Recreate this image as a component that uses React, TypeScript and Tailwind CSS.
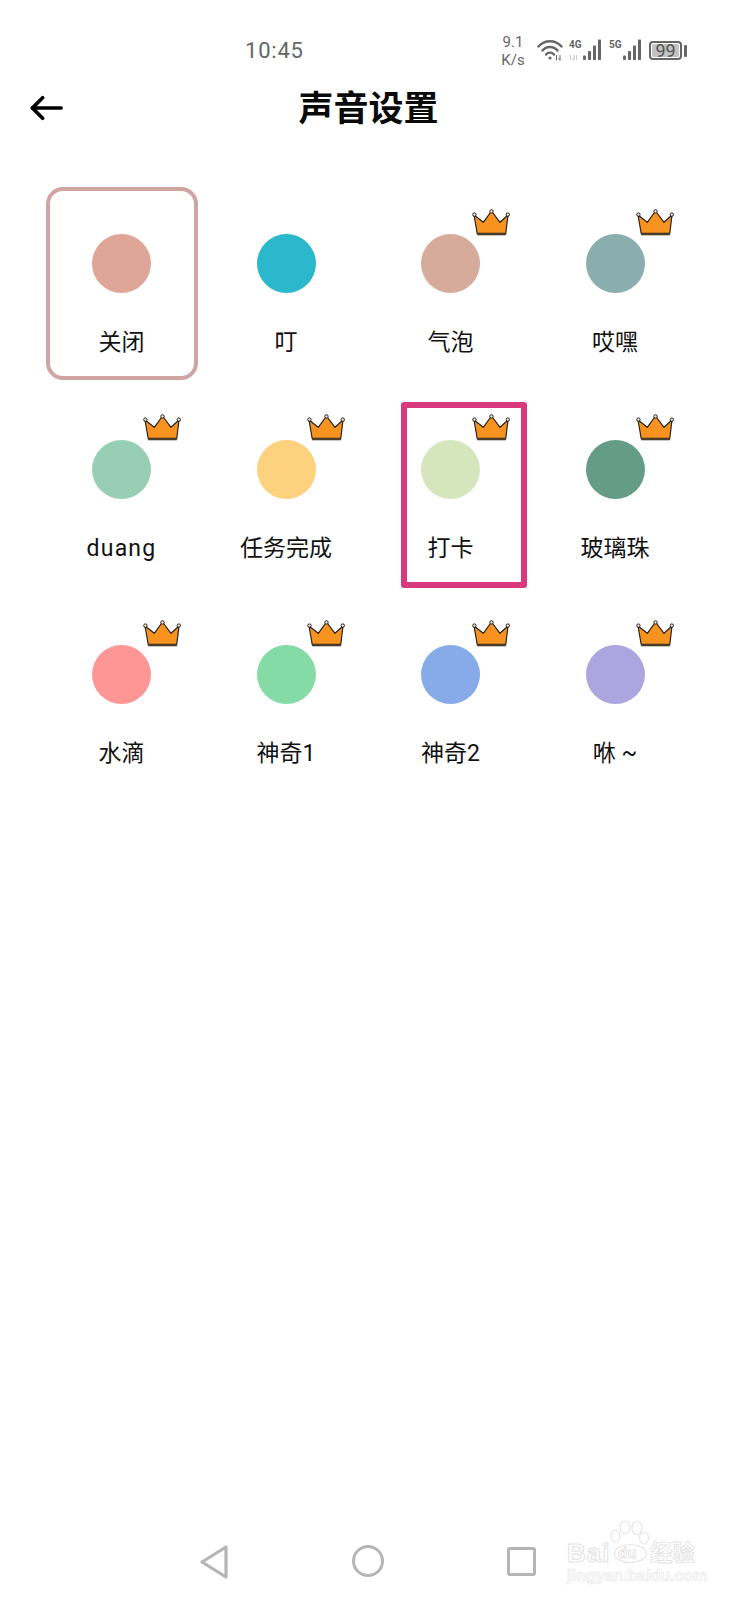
const cjk = "font-['Roboto','Noto_Sans_CJK_SC',sans-serif]";

const sounds = [
  { name: "关闭", color: "bg-[#dfa697]", vip: false },
  { name: "叮", color: "bg-[#2bb7cc]", vip: false },
  { name: "气泡", color: "bg-[#d7ab9c]", vip: true },
  { name: "哎嘿", color: "bg-[#8aadae]", vip: true },
  { name: "duang", color: "bg-[#98cfb4]", vip: true },
  { name: "任务完成", color: "bg-[#fdd27e]", vip: true },
  { name: "打卡", color: "bg-[#d5e6bc]", vip: true },
  { name: "玻璃珠", color: "bg-[#659c88]", vip: true },
  { name: "水滴", color: "bg-[#ff9696]", vip: true },
  { name: "神奇1", color: "bg-[#84dba6]", vip: true },
  { name: "神奇2", color: "bg-[#87abe8]", vip: true },
  { name: "咻 ~", color: "bg-[#aca5de]", vip: true },
];

function Crown() {
  return (
    <svg viewBox="0 0 38 28" className="absolute left-[103.5px] top-[28.5px] h-[28px] w-[38px]">
      <path d="M2 6 L11.3 13.3 L19.5 2 L28 13.3 L36 6 L33.7 25 H5.3 Z" fill="#f7931e" stroke="#222" strokeWidth="1.2" strokeLinejoin="round" />
      <path d="M5.2 25 H33.8" stroke="#4a3a28" strokeWidth="2.6" />
      <circle cx="2.4" cy="5.6" r="1.7" fill="#fde6c8" stroke="#222" strokeWidth="1" />
      <circle cx="19.5" cy="2.4" r="1.7" fill="#fde6c8" stroke="#222" strokeWidth="1" />
      <circle cx="35.8" cy="5.6" r="1.7" fill="#fde6c8" stroke="#222" strokeWidth="1" />
    </svg>
  );
}

function Signal({ tag, data }: { tag: string; data?: boolean }) {
  return (
    <div className="relative mt-[6px] h-[21px] w-[33px]">
      <span className="absolute left-[1px] top-[1px] font-['Roboto',sans-serif] text-[10px] font-bold leading-[10px] text-[#666]">{tag}</span>
      <svg viewBox="0 0 33 21" className="absolute inset-0 h-[21px] w-[33px]">
        {data && <path d="M2.5 16 V21 M6 16 V21 M6 21 L4.6 19.2 M8.5 16 V21" stroke="#ccc" strokeWidth="1.2" fill="none" />}
        <g fill="#666">
          <rect x="15" y="16.5" width="3" height="4.5" rx="1" />
          <rect x="20" y="12" width="3" height="9" rx="0.8" />
          <rect x="25" y="6.5" width="3" height="14.5" rx="0.8" />
          <rect x="30" y="0.5" width="3" height="20.5" rx="0.8" />
        </g>
      </svg>
    </div>
  );
}

function StatusBar() {
  return (
    <div className="flex h-[76px] items-start pt-[33px] text-[#666]">
      <span className="ml-[245px] mt-[5px] w-[60px] font-['Roboto',sans-serif] text-[22px] leading-[26px] tracking-[0.8px]">10:45</span>
      <div className="ml-[195px] w-[26px] text-center font-['Roboto',sans-serif] text-[15px] leading-[18px]">
        9.1<br />K/s
      </div>
      <svg viewBox="0 0 26 22" fill="none" className="ml-[11px] mt-[6px] h-[22px] w-[26px]" stroke="#666" strokeWidth="2.4" strokeLinecap="round">
        <path d="M1.5 7.5 C7.5 0.5 18.5 0.5 24.5 7.5" />
        <path d="M5.5 11.5 C9.5 6.8 16.5 6.8 20.5 11.5" />
        <path d="M9 15.5 C11 13 15 13 17 15.5" />
        <circle cx="13" cy="19" r="1.6" fill="#666" stroke="none" />
        <path d="M19.5 16.5 V21 M23 16.5 V21 M23 21 L21.8 19.5" strokeWidth="1" stroke="#666" />
      </svg>
      <div className="ml-[5px]"><Signal tag="4G" data /></div>
      <div className="ml-[7px]"><Signal tag="5G" /></div>
      <div className="ml-[8px] mt-[8px] flex items-center">
        <div className="flex h-[19px] w-[33px] items-center rounded-[4px] border-2 border-[#666] p-[1px]">
          <div className="flex h-full w-full items-center justify-center rounded-[2px] bg-[#c2c2c2] font-['Roboto',sans-serif] text-[18px] leading-none text-[#555]">99</div>
        </div>
        <div className="ml-[2px] h-[12px] w-[3px] rounded-[1px] bg-[#666]" />
      </div>
    </div>
  );
}

function Header() {
  return (
    <div className="relative flex h-[64px] items-center justify-center pt-[2px]">
      <svg viewBox="0 0 34 26" fill="none" className="absolute left-[30px] top-[19px] h-[26px] w-[33px]" stroke="#000" strokeWidth="3.8" strokeLinecap="round" strokeLinejoin="round">
        <path d="M2.5 13 H32" />
        <path d="M13 2.5 L2.5 13 L13 23.5" />
      </svg>
      <h1 className={`${cjk} text-[35px] font-bold leading-none text-[#0a0a0a]`}>声音设置</h1>
    </div>
  );
}

function SoundCell({ name, color, vip, index }: { name: string; color: string; vip: boolean; index: number }) {
  return (
    <div className="relative flex h-[205.5px] flex-col items-center pt-[54px]">
      {index === 0 && (
        <div className="absolute left-[6.75px] top-[7px] h-[192.5px] w-[152px] rounded-[17px] border-4 border-[#cfa5a3]" />
      )}
      <div className={`h-[59px] w-[59px] rounded-full ${color}`} />
      {vip && <Crown />}
      <div className={`${cjk} mt-[35px] text-[23px] leading-[30px] text-[#111] ${name === "duang" ? "tracking-[1.2px]" : ""}`}>{name}</div>
      {index === 6 && (
        <div className="absolute left-[32.75px] top-[16.5px] h-[186px] w-[126px] rounded-[3px] border-[6px] border-[#d93a7f]" />
      )}
    </div>
  );
}

function Watermark() {
  return (
    <div className="absolute left-[567px] top-0 h-[60px] w-[135px] text-white">
      <svg viewBox="0 0 44 44" fill="none" className="absolute left-[43px] top-[-10px] h-[44px] w-[44px]" stroke="#e6e6e6" strokeWidth="1.2">
        <ellipse cx="20.5" cy="33.5" rx="16" ry="9" />
        <ellipse cx="5.5" cy="16" rx="4.5" ry="6" />
        <ellipse cx="15" cy="7.5" rx="5" ry="6.5" />
        <ellipse cx="27" cy="8" rx="5" ry="6.5" />
        <ellipse cx="34" cy="18" rx="4.5" ry="6" />
      </svg>
      <span className="absolute left-0 top-[9px] font-['Liberation_Sans',sans-serif] text-[26px] font-bold leading-[28px] tracking-[1px] [-webkit-text-stroke:1px_#e2e2e2]">Bai</span>
      <span className="absolute left-[51px] top-[15px] font-['Liberation_Sans',sans-serif] text-[15px] font-bold leading-[16px] [-webkit-text-stroke:0.8px_#e2e2e2]">du</span>
      <span className={`${cjk} absolute left-[83px] top-[9px] text-[22.5px] font-bold leading-[28px] [-webkit-text-stroke:0.8px_#e2e2e2]`}>经验</span>
      <span className="absolute left-0 top-[37px] whitespace-nowrap font-['Liberation_Sans',sans-serif] text-[16px] font-bold leading-[18px] [-webkit-text-stroke:0.7px_#e8e8e8]">jingyan.baidu.com</span>
    </div>
  );
}

function NavBar() {
  return (
    <div className="relative mt-auto flex h-[70px] items-start pt-[15px]">
      <svg viewBox="0 0 28 34" fill="none" className="ml-[200px] h-[34px] w-[28px]" stroke="#b5b5b5" strokeWidth="3.2" strokeLinejoin="round">
        <path d="M26 2 V32 L2 17 Z" />
      </svg>
      <div className="ml-[124px] h-[32px] w-[32px] rounded-full border-[3px] border-[#b5b5b5]" />
      <div className="ml-[123px] mt-[2px] h-[29px] w-[29px] rounded-[3px] border-[3px] border-[#b5b5b5]" />
      <Watermark />
    </div>
  );
}

export default function App() {
  return (
    <div className="flex h-[1600px] w-[737px] flex-col overflow-hidden bg-white">
      <StatusBar />
      <Header />
      <div className="mt-[40px] grid grid-cols-4 pl-[39.25px] pr-[39.75px]">
        {sounds.map((s, i) => (
          <SoundCell key={s.name} index={i} name={s.name} color={s.color} vip={s.vip} />
        ))}
      </div>
      <NavBar />
    </div>
  );
}
